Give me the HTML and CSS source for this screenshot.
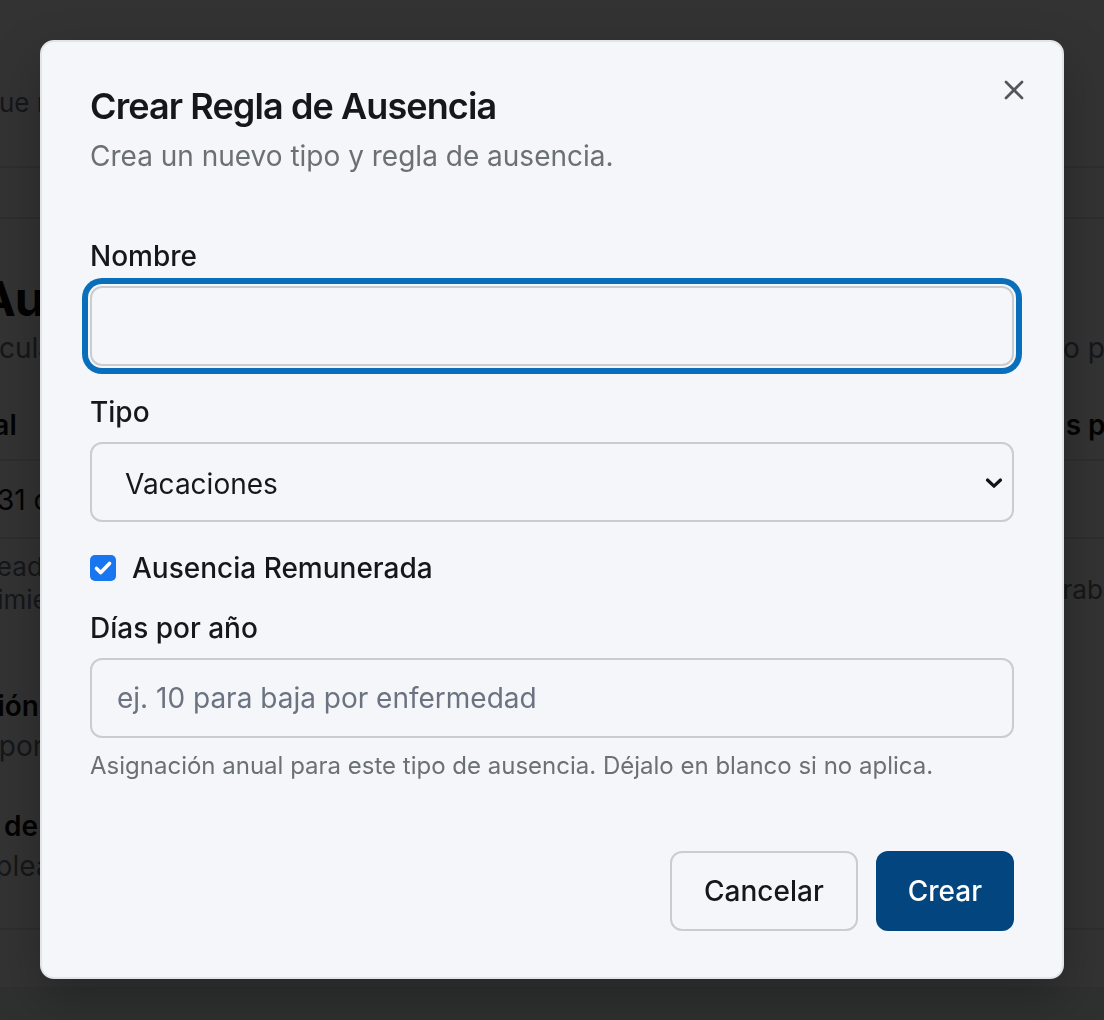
FILE: index.html
```html
<!DOCTYPE html>
<html lang="es">
<head>
<meta charset="utf-8">
<title>Crear Regla de Ausencia</title>
<link rel="stylesheet" href="styles.css">
</head>
<body>
<div class="page">
  <header class="topbar">
    <p class="top-text">que requieren tu atención hoy</p>
  </header>
  <nav class="tabs"></nav>
  <main class="content">
    <h1 class="page-title">Ausencias</h1>
    <div class="bg-row row-sub">
      <span class="cell-l sub-l">Calcula y gestiona las reglas de ausencia</span>
      <span class="cell-r sub-r">tipo por año</span>
    </div>
    <div class="bg-row row-head">
      <span class="cell-l head-l">Total</span>
      <span class="cell-r head-r">Días por año</span>
    </div>
    <div class="bg-row row-data">
      <span class="cell-l data-l">31 días</span>
      <span class="cell-r"></span>
    </div>
    <div class="bg-row row-notes">
      <div class="cell-l notes-l">
        <span class="note-1">Planeadas con antelación</span>
        <span class="note-2">Seguimiento anual</span>
      </div>
      <span class="cell-r notes-r">trabajo</span>
    </div>
    <section class="bg-section">
      <p class="sec-title sec1-t">Acumulación</p>
      <p class="sec-text sec1-d">Proporcional al tiempo</p>
      <p class="sec-title sec2-t">Días de gracia</p>
      <p class="sec-text sec2-d">Empleados nuevos</p>
    </section>
    <div class="page-foot"></div>
  </main>
</div>

<div class="overlay"></div>

<div class="dialog" role="dialog" aria-labelledby="dlg-title">
  <button class="close" type="button" aria-label="Cerrar">
    <svg width="32" height="32" viewBox="0 0 24 24" fill="none" stroke="currentColor" stroke-width="2" stroke-linecap="round" stroke-linejoin="round"><path d="M18 6 6 18"/><path d="m6 6 12 12"/></svg>
  </button>
  <div class="dialog-header">
    <h2 class="dialog-title" id="dlg-title">Crear Regla de Ausencia</h2>
    <p class="dialog-desc">Crea un nuevo tipo y regla de ausencia.</p>
  </div>
  <form class="form">
    <div class="field">
      <label class="field-label" for="nombre">Nombre</label>
      <input class="input is-focused" id="nombre" type="text">
    </div>
    <div class="field">
      <label class="field-label" for="tipo">Tipo</label>
      <div class="select-wrap">
        <select class="input select" id="tipo">
          <option>Vacaciones</option>
          <option>Enfermedad</option>
          <option>Personal</option>
        </select>
        <svg class="chevron" width="18" height="12" viewBox="0 0 18 12" fill="none" stroke="#111318" stroke-width="3.2" stroke-linecap="round" stroke-linejoin="round"><path d="M2.5 3 9 9.2 15.5 3"/></svg>
      </div>
    </div>
    <label class="check-row">
      <span class="check-box"><svg width="26" height="26" viewBox="0 0 26 26" fill="none" stroke="#fff" stroke-width="3.6" stroke-linecap="round" stroke-linejoin="round"><path d="M6.5 13.5 10.8 17.6 19.5 8.4"/></svg></span>
      <span class="check-text">Ausencia Remunerada</span>
    </label>
    <div class="field">
      <label class="field-label" for="dias">Días por año</label>
      <input class="input" id="dias" type="text" placeholder="ej. 10 para baja por enfermedad">
      <p class="help">Asignación anual para este tipo de ausencia. Déjalo en blanco si no aplica.</p>
    </div>
  </form>
  <div class="footer">
    <button class="btn btn-outline" type="button">Cancelar</button>
    <button class="btn btn-primary" type="button">Crear</button>
  </div>
</div>
</body>
</html>
```

FILE: styles.css
```css
html, body {
  margin: 0;
  padding: 0;
  overflow: hidden;
}

body {
  width: 1104px;
  height: 1020px;
  position: relative;
  background: #ffffff;
  font-family: Inter, "Noto Sans", "Liberation Sans", sans-serif;
  color: #111318;
}

/* ---------- background page ---------- */
.page {
  width: 1104px;
  white-space: nowrap;
}

.topbar {
  box-sizing: border-box;
  height: 168px;
  padding-top: 85px;
  border-bottom: 2px solid #e5e7eb;
}

.top-text {
  margin: 0 0 0 -17px;
  font-size: 26px;
  line-height: 36px;
  color: #6b7280;
}

.tabs {
  box-sizing: border-box;
  height: 51px;
  border-bottom: 2px solid #e5e7eb;
}

.content {
  padding-top: 52px;
}

.page-title {
  margin: 0 0 0 -20px;
  font-size: 48px;
  line-height: 56px;
  font-weight: 700;
  letter-spacing: -1px;
  color: #111318;
}

.bg-row {
  display: flex;
  font-size: 28px;
  line-height: 40px;
}

.cell-l {
  flex: 0 0 auto;
}

.cell-r {
  flex: 0 0 auto;
}

.row-sub {
  margin-top: 1px;
  color: #6b7280;
}
.sub-l { margin-left: -44px; width: 1074px; }

.row-head {
  margin-top: 37px;
  padding-bottom: 14px;
  border-bottom: 2px solid #e5e7eb;
  font-weight: 600;
}
.head-l { margin-left: -50px; width: 1072px; }

.row-data {
  padding-top: 19px;
  padding-bottom: 17px;
  border-bottom: 2px solid #e5e7eb;
}
.data-l { margin-left: -3px; }

.row-notes {
  margin-top: 11px;
}
.notes-l {
  display: flex;
  flex-direction: column;
  width: 1054px;
  font-size: 26px;
  line-height: 33px;
  color: #6b7280;
}
.note-1 { margin-left: -56px; }
.note-2 { margin-left: -66px; }
.notes-r {
  padding-top: 20px;
  font-size: 26px;
  color: #6b7280;
}

.bg-section {
  margin-top: 70px;
  padding-bottom: 42px;
  border-bottom: 2px solid #e5e7eb;
}

.bg-section p {
  margin: 0;
  font-size: 28px;
  line-height: 40px;
}

.sec-title { font-weight: 600; color: #111318; }
.sec-text { color: #6b7280; }
.sec1-t { margin-left: -138px !important; }
.sec1-d { margin-left: -46px !important; }
.sec2-t { margin-left: -62px !important; margin-top: 40px !important; }
.sec2-d { margin-left: -46px !important; }

.page-foot {
  margin-top: 57px;
  height: 120px;
  background: #eceef1;
}

.overlay {
  position: fixed;
  inset: 0;
  background: rgba(0, 0, 0, 0.8);
}

/* ---------- dialog ---------- */
.dialog {
  position: absolute;
  top: 40px;
  left: 40px;
  width: 1024px;
  box-sizing: border-box;
  padding: 46px 48px 46px;
  background: #f5f6fa;
  border: 2px solid #e2e4e8;
  border-radius: 14px;
  box-shadow: 0 20px 50px rgba(0, 0, 0, 0.25);
}

.close {
  position: absolute;
  top: 32px;
  right: 32px;
  width: 32px;
  height: 32px;
  padding: 0;
  border: 0;
  background: transparent;
  color: #52565c;
  display: flex;
  align-items: center;
  justify-content: center;
}

.dialog-header {
  display: flex;
  flex-direction: column;
  gap: 12px;
}

.dialog-title {
  margin: 0;
  font-size: 36px;
  line-height: 36px;
  font-weight: 600;
  letter-spacing: -0.9px;
  color: #15171c;
}

.dialog-desc {
  margin: 0;
  font-size: 28px;
  line-height: 40px;
  color: #6b7075;
}

.form {
  margin: 66px 0 0;
  display: flex;
  flex-direction: column;
  gap: 32px;
}

.field {
  display: flex;
  flex-direction: column;
}

.field-label {
  display: block;
  margin-bottom: 16px;
  font-size: 28px;
  line-height: 28px;
  font-weight: 500;
  color: #15171c;
}

.input {
  box-sizing: border-box;
  width: 100%;
  height: 80px;
  margin: 0;
  padding: 0 25px;
  border: 2px solid #c9ccd1;
  border-radius: 12px;
  background: #f5f6fa;
  font-family: inherit;
  font-size: 28px;
  color: #15171c;
  outline: none;
}

.input::placeholder {
  color: #6b7280;
  opacity: 1;
}

.is-focused {
  box-shadow: 0 0 0 2px #f5f6fa, 0 0 0 8px #0a6fba;
}

.select-wrap {
  position: relative;
}

.select {
  appearance: none;
  -webkit-appearance: none;
  padding-left: 33px;
  padding-top: 4px;
}

.chevron {
  position: absolute;
  right: 11px;
  top: 35px;
  pointer-events: none;
}

.check-row {
  display: flex;
  align-items: center;
  gap: 16px;
  height: 28px;
}

.check-box {
  width: 26px;
  height: 26px;
  border-radius: 5px;
  background: #1a75f0;
  display: flex;
}

.check-text {
  font-size: 28px;
  line-height: 28px;
  font-weight: 500;
  color: #15171c;
}

.help {
  margin: 12px 0 0;
  font-size: 24px;
  line-height: 32px;
  color: #6b7075;
}

.footer {
  margin-top: 69px;
  display: flex;
  justify-content: flex-end;
  gap: 18px;
}

.btn {
  box-sizing: border-box;
  height: 80px;
  padding: 0 32px;
  border-radius: 12px;
  font-family: inherit;
  font-size: 28px;
  font-weight: 500;
}

.btn-outline {
  border: 2px solid #c9ccd1;
  background: transparent;
  color: #15171c;
}

.btn-primary {
  border: 0;
  background: #03457e;
  color: #ffffff;
}
```
